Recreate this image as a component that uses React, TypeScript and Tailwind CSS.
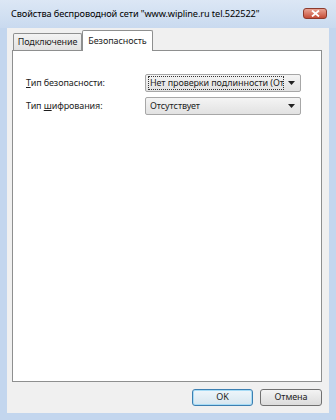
import React from "react";

function Select({ value, focused }: { value: string; focused?: boolean }) {
  return (
    <div className="flex h-[18px] w-[156px] items-center rounded-[2px] border border-[#a7a7a7] bg-gradient-to-b from-[#f4f4f4] to-[#e2e2e2] pl-[2px] pr-[5px]">
      <div
        className={
          "flex h-[14px] flex-1 items-center overflow-hidden whitespace-nowrap px-[1px] " +
          (focused ? "border border-dotted border-[#333]" : "border border-transparent")
        }
      >
        {value}
      </div>
      <svg width="7" height="4" viewBox="0 0 7 4" className="ml-[4px] shrink-0">
        <path d="M0 0h7L3.5 4z" fill="#222" />
      </svg>
    </div>
  );
}

export default function App() {
  return (
    <div
      className="flex h-[420px] w-[336px] flex-col bg-[#c3d6ee] text-[9px] tracking-[-0.1px] text-[#1e1e1e]"
      style={{ fontFamily: '"Noto Sans", "Open Sans", sans-serif' }}
    >
      {/* title bar */}
      <div className="flex h-[28px] items-center justify-between bg-gradient-to-b from-[#dce7f5] to-[#c9daef] pl-[11px] pr-[9px]">
        <span className="whitespace-nowrap text-[9.2px] text-black">
          Свойства беспроводной сети "www.wipline.ru tel.522522"
        </span>
        <div className="mb-[2px] flex h-[11px] w-[24px] items-center justify-center rounded-[3px] border border-[#8d3a2c] bg-gradient-to-b from-[#e9a394] to-[#c44b36]">
          <svg width="9" height="7" viewBox="0 0 9 7">
            <path d="M1 0.5l7 6M8 0.5l-7 6" stroke="#fff" strokeWidth="1.8" />
          </svg>
        </div>
      </div>

      {/* client area */}
      <div className="mx-[7px] mb-[7px] flex flex-1 flex-col bg-[#f0f0f0] pl-[5px] pr-[7px] pt-[1px]">
        <div className="flex h-[21px] items-end">
          <div className="ml-[1px] flex h-[17px] w-[69px] items-center justify-center rounded-t-[2px] border border-b-0 border-[#8e8f8f] bg-gradient-to-b from-[#f3f3f3] to-[#e2e2e2] text-[#1e1e1e]">
            Подключение
          </div>
          <div className="relative top-[1px] z-10 flex h-[21px] w-[71px] items-start justify-center rounded-t-[2px] border border-b-0 border-[#8e8f8f] bg-white pt-[3px]">
            Безопасность
          </div>
        </div>
        <div className="flex flex-1 flex-col border border-[#8e8f8f] bg-white pl-[13px] pt-[23px]">
          <div className="flex items-center">
            <span className="w-[119px]">
              <span className="underline">Т</span>ип безопасности:
            </span>
            <Select value="Нет проверки подлинности (Открытая система)" focused />
          </div>
          <div className="mt-[5px] flex items-center">
            <span className="w-[119px]">
              Тип <span className="underline">ш</span>ифрования:
            </span>
            <Select value="Отсутствует" />
          </div>
        </div>
        <div className="flex h-[31px] items-center justify-end gap-[7px] pb-[1px]">
          <button className="h-[17px] w-[61px] rounded-[3px] border border-[#3c7fb1] bg-gradient-to-b from-[#eef6fb] to-[#d7e6ef] shadow-[inset_0_0_0_1px_#a7dcf6]">
            OK
          </button>
          <button className="h-[17px] w-[62px] rounded-[3px] border border-[#707070] bg-gradient-to-b from-[#f3f3f3] to-[#dcdcdc]">
            Отмена
          </button>
        </div>
      </div>
    </div>
  );
}
